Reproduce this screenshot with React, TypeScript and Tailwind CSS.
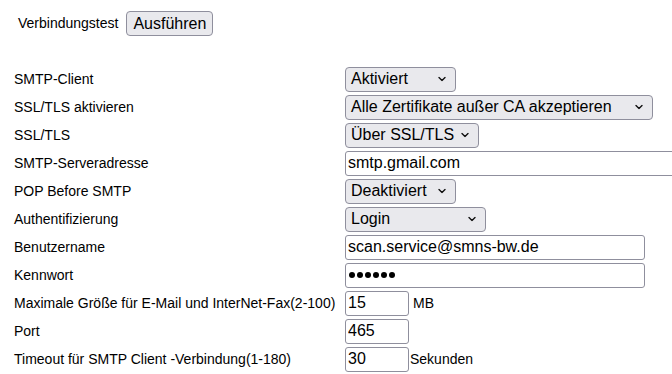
import React from 'react';

const ctl = "font-['Liberation_Sans',Arial,sans-serif] text-[16px] text-black";

function Chevron() {
    return (
        <svg className="pointer-events-none absolute right-[10px] top-1/2 -translate-y-1/2" width="8" height="5" viewBox="0 0 8 5">
            <path d="M1 1 L4 4 L7 1" fill="none" stroke="#111" strokeWidth="1.4" strokeLinecap="round" strokeLinejoin="round" />
        </svg>
    );
}

function Select({ value, width }: { value: string; width: string }) {
    return (
        <div className={`relative h-[25px] ${width}`}>
            <div className={`${ctl} flex h-full w-full items-center rounded-[4px] border border-[#8f8f9d] bg-[#e9e9ed] pl-[5px] pr-6 leading-none whitespace-nowrap`}>
                {value}
            </div>
            <Chevron />
        </div>
    );
}

function Input({ value, width }: { value: string; width: string }) {
    return (
        <input
            readOnly
            type="text"
            value={value}
            className={`${ctl} h-[25px] ${width} rounded-[3px] border border-[#8f8f9d] bg-white px-[2px] outline-none`}
        />
    );
}

function Password({ count, width }: { count: number; width: string }) {
    return (
        <div className={`flex h-[25px] ${width} items-center gap-[2px] rounded-[3px] border border-[#8f8f9d] bg-white pl-[3px]`}>
            {Array.from({ length: count }).map((_, i) => (
                <span key={i} className="h-[6px] w-[6px] rounded-full bg-black" />
            ))}
        </div>
    );
}

type Row = { label: string; control: React.ReactNode };

const rows: Row[] = [
    { label: 'SMTP-Client', control: <Select value="Aktiviert" width="w-[111px]" /> },
    { label: 'SSL/TLS aktivieren', control: <Select value="Alle Zertifikate außer CA akzeptieren" width="w-[308px]" /> },
    { label: 'SSL/TLS', control: <Select value="Über SSL/TLS" width="w-[134px]" /> },
    { label: 'SMTP-Serveradresse', control: <Input value="smtp.gmail.com" width="w-[340px]" /> },
    { label: 'POP Before SMTP', control: <Select value="Deaktiviert" width="w-[111px]" /> },
    { label: 'Authentifizierung', control: <Select value="Login" width="w-[141px]" /> },
    { label: 'Benutzername', control: <Input value="scan.service@smns-bw.de" width="w-[300px]" /> },
    { label: 'Kennwort', control: <Password count={6} width="w-[300px]" /> },
    {
        label: 'Maximale Größe für E-Mail und InterNet-Fax(2-100)',
        control: (
            <div className="flex items-center">
                <Input value="15" width="w-[64px]" />
                <span className="ml-[4px]">MB</span>
            </div>
        ),
    },
    { label: 'Port', control: <Input value="465" width="w-[64px]" /> },
    {
        label: 'Timeout für SMTP Client -Verbindung(1-180)',
        control: (
            <div className="flex items-center">
                <Input value="30" width="w-[64px]" />
                <span className="ml-[1px]">Sekunden</span>
            </div>
        ),
    },
];

export default function App() {
    return (
        <div className="h-[374px] w-[672px] overflow-hidden bg-white font-['Liberation_Sans',Arial,sans-serif] text-[14px] text-black">
            <div className="flex items-center pl-[18px] pt-[11px]">
                <span>Verbindungstest</span>
                <button className={`${ctl} ml-[8px] h-[25px] rounded-[4px] border border-[#8f8f9d] bg-[#e9e9ed] px-[6px] leading-none`}>
                    Ausführen
                </button>
            </div>
            <div className="mt-[29px] pl-[14px]">
                {rows.map((r) => (
                    <div key={r.label} className="flex h-[28px] items-center">
                        <div className="w-[331px] shrink-0 whitespace-nowrap">{r.label}</div>
                        <div className="shrink-0">{r.control}</div>
                    </div>
                ))}
            </div>
        </div>
    );
}
